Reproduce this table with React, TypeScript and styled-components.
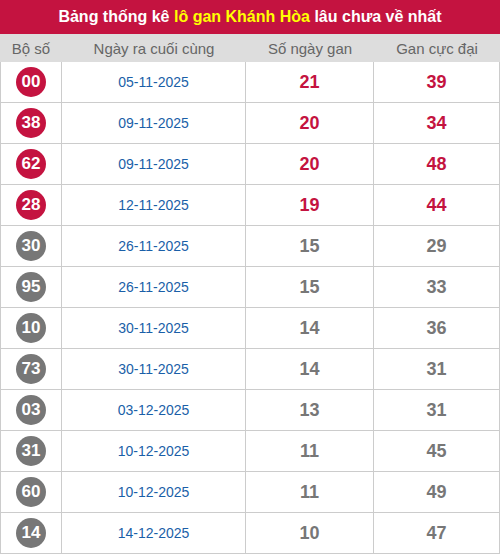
import styled, { createGlobalStyle } from 'styled-components';

type Row = { num: string; date: string; days: number; max: number; hot: boolean };

const rows: Row[] = [
  { num: '00', date: '05-11-2025', days: 21, max: 39, hot: true },
  { num: '38', date: '09-11-2025', days: 20, max: 34, hot: true },
  { num: '62', date: '09-11-2025', days: 20, max: 48, hot: true },
  { num: '28', date: '12-11-2025', days: 19, max: 44, hot: true },
  { num: '30', date: '26-11-2025', days: 15, max: 29, hot: false },
  { num: '95', date: '26-11-2025', days: 15, max: 33, hot: false },
  { num: '10', date: '30-11-2025', days: 14, max: 36, hot: false },
  { num: '73', date: '30-11-2025', days: 14, max: 31, hot: false },
  { num: '03', date: '03-12-2025', days: 13, max: 31, hot: false },
  { num: '31', date: '10-12-2025', days: 11, max: 45, hot: false },
  { num: '60', date: '10-12-2025', days: 11, max: 49, hot: false },
  { num: '14', date: '14-12-2025', days: 10, max: 47, hot: false },
];

const GlobalStyle = createGlobalStyle`
  body {
    margin: 0;
    font-family: "Liberation Sans", Arial, sans-serif;
    background: #fff;
  }
`;

const App = () => {
  return (
    <Wrapper>
      <GlobalStyle />
      <Title>
        Bảng thống kê <Highlight>lô gan Khánh Hòa</Highlight> lâu chưa về nhất
      </Title>
      <HeadRow>
        <HeadCell>Bộ số</HeadCell>
        <HeadCell>Ngày ra cuối cùng</HeadCell>
        <HeadCell>Số ngày gan</HeadCell>
        <HeadCell>Gan cực đại</HeadCell>
      </HeadRow>
      {rows.map(r => (
        <BodyRow key={r.num}>
          <Cell first>
            <Ball hot={r.hot}>{r.num}</Ball>
          </Cell>
          <Cell>
            <DateText>{r.date}</DateText>
          </Cell>
          <Cell>
            <Count hot={r.hot}>{r.days}</Count>
          </Cell>
          <Cell>
            <Count hot={r.hot}>{r.max}</Count>
          </Cell>
        </BodyRow>
      ))}
    </Wrapper>
  );
};

export default App;

const Wrapper = styled.div`
  width: 500px;
  display: flex;
  flex-direction: column;
`;

const Title = styled.div`
  height: 34px;
  background-color: #c41340;
  color: #fff;
  font-weight: bold;
  font-size: 16px;
  display: flex;
  align-items: center;
  justify-content: center;
  white-space: pre;
`;

const Highlight = styled.span`
  color: #ffff00;
`;

const HeadRow = styled.div`
  display: grid;
  grid-template-columns: 62px 184px 128px 126px;
  height: 28px;
  background-color: #dddddd;
`;

const HeadCell = styled.div`
  display: flex;
  align-items: center;
  justify-content: center;
  color: #666;
  font-size: 15px;
`;

const BodyRow = styled.div`
  display: grid;
  grid-template-columns: 62px 184px 128px 126px;
  height: 41px;
`;

const Cell = styled.div<{ first?: boolean }>`
  display: flex;
  align-items: center;
  justify-content: center;
  border-left: ${({ first }) => (first ? '1px solid #cccccc' : 'none')};
  border-right: 1px solid #cccccc;
  border-bottom: 1px solid #cccccc;
`;

const Ball = styled.div<{ hot: boolean }>`
  width: 30px;
  height: 30px;
  border-radius: 50%;
  background-color: ${({ hot }) => (hot ? '#c41340' : '#777777')};
  color: #fff;
  font-weight: bold;
  font-size: 17px;
  display: flex;
  align-items: center;
  justify-content: center;
`;

const DateText = styled.span`
  color: #1a5fa8;
  font-size: 14px;
`;

const Count = styled.span<{ hot: boolean }>`
  color: ${({ hot }) => (hot ? '#c41340' : '#777777')};
  font-weight: bold;
  font-size: 18px;
`;
